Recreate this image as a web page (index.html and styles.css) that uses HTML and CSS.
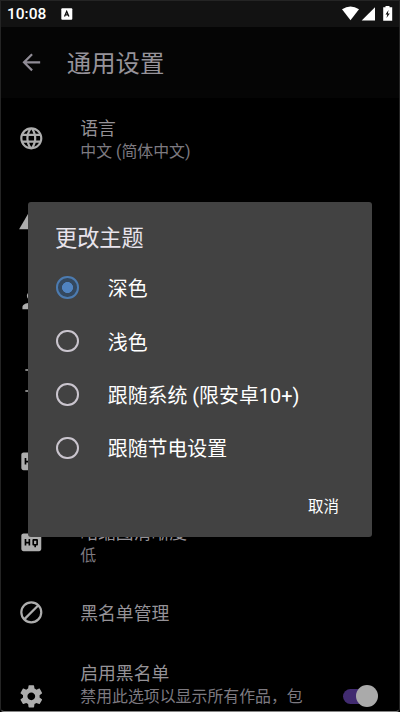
FILE: index.html
```html
<!DOCTYPE html>
<html lang="zh-CN">
<head>
<meta charset="utf-8">
<title>通用设置</title>
<link rel="stylesheet" href="styles.css">
</head>
<body>
<div class="screen">
  <header class="status">
    <span class="clock">10:08</span>
    <svg class="badge" viewBox="0 0 12 12"><rect x=".3" y=".3" width="11" height="11.4" rx="1" fill="#fff"/><path d="M3.5 8.4 5.7 3.4 7.9 8.4M4.4 6.8h2.7" fill="none" stroke="#111" stroke-width="1.3"/></svg>
    <svg class="signals" viewBox="0 0 52 16"><path d="M1 3.2Q9.500-2.200 18 3.2L9.500 14.200z" fill="#fff"/><path d="M34 1.200V14.600H20.700z" fill="#fff"/><path d="M44.500 0h4v1.200h2.700v13.600h-9V1.200h2.300z" fill="#fff"/><path d="M47.500 4 44.500 8.400h1.800L45.500 12l3.300-4.600h-1.900z" fill="#111"/></svg>
  </header>
  <div class="appbar">
    <svg class="icon back" viewBox="0 0 24 24"><path d="M20 11H7.830l5.590-5.590L12 4l-8 8 8 8 1.410-1.410L7.830 13H20v-2z"/></svg>
    <h1>通用设置</h1>
  </div>
  <main class="list">
    <div class="row">
      <svg class="icon" viewBox="0 0 24 24"><path d="M11.99 2C6.47 2 2 6.48 2 12s4.47 10 9.990 10C17.520 22 22 17.520 22 12S17.520 2 11.990 2zm6.930 6h-2.950c-.32-1.250-.78-2.450-1.380-3.560 1.840.63 3.370 1.910 4.330 3.560zM12 4.040c.83 1.200 1.480 2.530 1.910 3.960h-3.820c.43-1.430 1.080-2.760 1.910-3.960zM4.260 14C4.100 13.360 4 12.690 4 12s.1-1.360.26-2h3.380c-.08.66-.14 1.320-.14 2 0 .68.06 1.340.14 2H4.260zm.82 2h2.950c.32 1.250.78 2.450 1.380 3.560-1.840-.63-3.370-1.900-4.330-3.560zm2.950-8H5.080c.96-1.660 2.490-2.930 4.330-3.560C8.810 5.550 8.350 6.750 8.030 8zM12 19.960c-.83-1.200-1.480-2.530-1.910-3.960h3.820c-.43 1.430-1.080 2.760-1.910 3.960zM14.340 14H9.660c-.09-.66-.16-1.320-.16-2 0-.68.07-1.350.16-2h4.680c.09.65.16 1.320.16 2 0 .68-.07 1.340-.16 2zm.25 5.560c.6-1.110 1.060-2.310 1.380-3.560h2.950c-.96 1.650-2.490 2.930-4.330 3.560zM16.360 14c.08-.66.14-1.320.14-2 0-.68-.06-1.340-.14-2h3.380c.16.64.26 1.310.26 2s-.1 1.360-.26 2h-3.380z"/></svg>
      <div class="text"><div class="name">语言</div><div class="sub">中文 (简体中文)</div></div>
    </div>
    <div class="row"><svg class="icon" viewBox="0 0 24 24"><path d="M1 21h22L12 2z"/></svg></div>
    <div class="row"><svg class="icon" viewBox="0 0 24 24"><path d="M12 12c2.210 0 4-1.790 4-4s-1.790-4-4-4-4 1.790-4 4 1.790 4 4 4zm0 2c-2.670 0-8 1.340-8 4v2h16v-2c0-2.660-5.330-4-8-4z"/></svg></div>
    <div class="row"><svg class="icon" viewBox="0 0 24 24"><path d="M6.600 2h2.200v1.400H6.600zM8.800 2h6.400v1.400H8.800zM6.600 20.900h10.800v1.400H6.600z"/></svg></div>
    <div class="row"><svg class="icon" viewBox="0 0 24 24"><path d="M19 4H5c-1.110 0-2 .9-2 2v12c0 1.100.89 2 2 2h14c1.100 0 2-.9 2-2V6c0-1.100-.9-2-2-2zm-8 11H9.500v-2h-2v2H6V9h1.500v2.500h2V9H11v6zm7-1c0 .55-.45 1-1 1h-.75v1.500h-1.500V15H14c-.55 0-1-.45-1-1v-4c0-.55.45-1 1-1h3c.55 0 1 .45 1 1v4zm-3.500-.5h2v-3h-2v3z"/></svg></div>
    <div class="row">
      <svg class="icon" viewBox="0 0 24 24"><path d="M19 4H5c-1.110 0-2 .9-2 2v12c0 1.100.89 2 2 2h14c1.100 0 2-.9 2-2V6c0-1.100-.9-2-2-2zm-8 11H9.500v-2h-2v2H6V9h1.500v2.500h2V9H11v6zm7-1c0 .55-.45 1-1 1h-.75v1.500h-1.500V15H14c-.55 0-1-.45-1-1v-4c0-.55.45-1 1-1h3c.55 0 1 .45 1 1v4zm-3.500-.5h2v-3h-2v3z"/></svg>
      <div class="text"><div class="name">略缩图清晰度</div><div class="sub">低</div></div>
    </div>
    <div class="row single">
      <svg class="icon" viewBox="0 0 24 24"><circle class="line" cx="12" cy="12" r="9"/><path class="line" d="M5.600 18.400 18.400 5.600"/></svg>
      <div class="text"><div class="name">黑名单管理</div></div>
    </div>
    <div class="row tall">
      <svg class="icon" viewBox="0 0 24 24"><path d="M19.430 12.980c.04-.32.07-.64.07-.98s-.03-.66-.07-.98l2.110-1.650c.19-.15.24-.42.12-.64l-2-3.460c-.12-.22-.39-.3-.61-.22l-2.490 1c-.52-.4-1.080-.73-1.690-.98l-.38-2.650C14.460 2.180 14.250 2 14 2h-4c-.25 0-.46.18-.49.42l-.38 2.650c-.61.25-1.170.59-1.690.98l-2.490-1c-.23-.09-.49 0-.61.22l-2 3.460c-.13.22-.07.49.12.64l2.110 1.650c-.04.32-.07.65-.07.98s.03.66.07.98l-2.110 1.650c-.19.15-.24.42-.12.64l2 3.460c.12.22.39.3.61.22l2.490-1c.52.4 1.080.73 1.690.98l.38 2.650c.03.24.24.42.49.42h4c.25 0 .46-.18.49-.42l.38-2.650c.61-.25 1.170-.59 1.690-.98l2.490 1c.23.09.49 0 .61-.22l2-3.460c.12-.22.07-.49-.12-.64l-2.110-1.650zM12 15.500c-1.930 0-3.500-1.570-3.500-3.500s1.570-3.500 3.500-3.500 3.500 1.570 3.500 3.500-1.570 3.500-3.500 3.500z"/></svg>
      <div class="text"><div class="name">启用黑名单</div><div class="sub">禁用此选项以显示所有作品，包</div></div>
      <div class="switch"><div class="thumb"></div></div>
    </div>
  </main>
  <section class="dialog">
    <h2>更改主题</h2>
    <div class="option"><span class="radio on"></span><span>深色</span></div>
    <div class="option"><span class="radio"></span><span>浅色</span></div>
    <div class="option"><span class="radio"></span><span>跟随系统 (限安卓10+)</span></div>
    <div class="option"><span class="radio"></span><span>跟随节电设置</span></div>
    <div class="cancel">取消</div>
  </section>
</div>
</body>
</html>
```
FILE: styles.css
```css
* { box-sizing: border-box; }
body { margin: 0; background: #000; font-family: Roboto, "Noto Sans CJK SC", sans-serif; }
.screen {
  position: relative; width: 400px; height: 712px; overflow: hidden; background: #000;
  border: 1px solid #242424; border-bottom-color: #858585; border-radius: 0 0 4px 4px;
}
.status { display: flex; align-items: center; height: 26px; background: #121212; padding: 0 6px 0 6px; }
.clock { font-size: 15.500px; font-weight: 500; color: #fff; width: 53.500px; }
.badge { width: 12px; height: 12px; }
.signals { width: 52px; height: 16px; margin-left: auto; }
.appbar { display: flex; align-items: center; height: 71px; background: #050505; padding-left: 16.700px; }
.icon { width: 26.600px; height: 26.600px; flex: none; fill: #adadad; }
.line { fill: none; stroke: #adadad; stroke-width: 2; }
.back { fill: #908c96; }
h1 { margin: 2px 0 0 22.500px; font-size: 24.400px; line-height: 36px; font-weight: 400; color: #96939a; }
.row { display: flex; align-items: center; height: 80.800px; padding-left: 16.700px; }
.text { flex: none; margin: 4px 0 0 36px; white-space: nowrap; }
.name { font-size: 17.800px; line-height: 24px; color: #959297; }
.sub { font-size: 15.900px; line-height: 22px; color: #7d7a80; }
.single { height: 60px; }
.single .text { margin-top: 2px; }
.tall { height: 107px; }
.tall .text { margin: 0 0 22px 36px; }
.switch { width: 34px; height: 15px; margin-left: 40px; border-radius: 8px; background: #412b70; }
.thumb { width: 22px; height: 22px; margin: -4px 0 0 13px; border-radius: 50%; background: #aaa; }
.dialog {
  position: absolute; left: 27px; top: 201px; width: 344px; height: 334.500px;
  padding: 20px 27px 0 28px; border-radius: 3px; background: #424242;
}
h2 { margin: 0 0 7px -1px; font-size: 22.200px; line-height: 32px; font-weight: 400; color: #e8e4ec; }
.option { display: flex; align-items: center; height: 53.400px; font-size: 19.900px; color: #fff; }
.radio { width: 22.500px; height: 22.500px; margin: 0 29px 0 .3px; border: 2px solid #cac5ce; border-radius: 50%; }
.on { border-color: #4c7bb0; background: radial-gradient(circle, #5083c0 0 5.200px, #34485e 5.800px); }
.cancel { margin: 21px 6px 0 0; text-align: right; font-size: 15.500px; line-height: 22px; color: #fff; }
```
